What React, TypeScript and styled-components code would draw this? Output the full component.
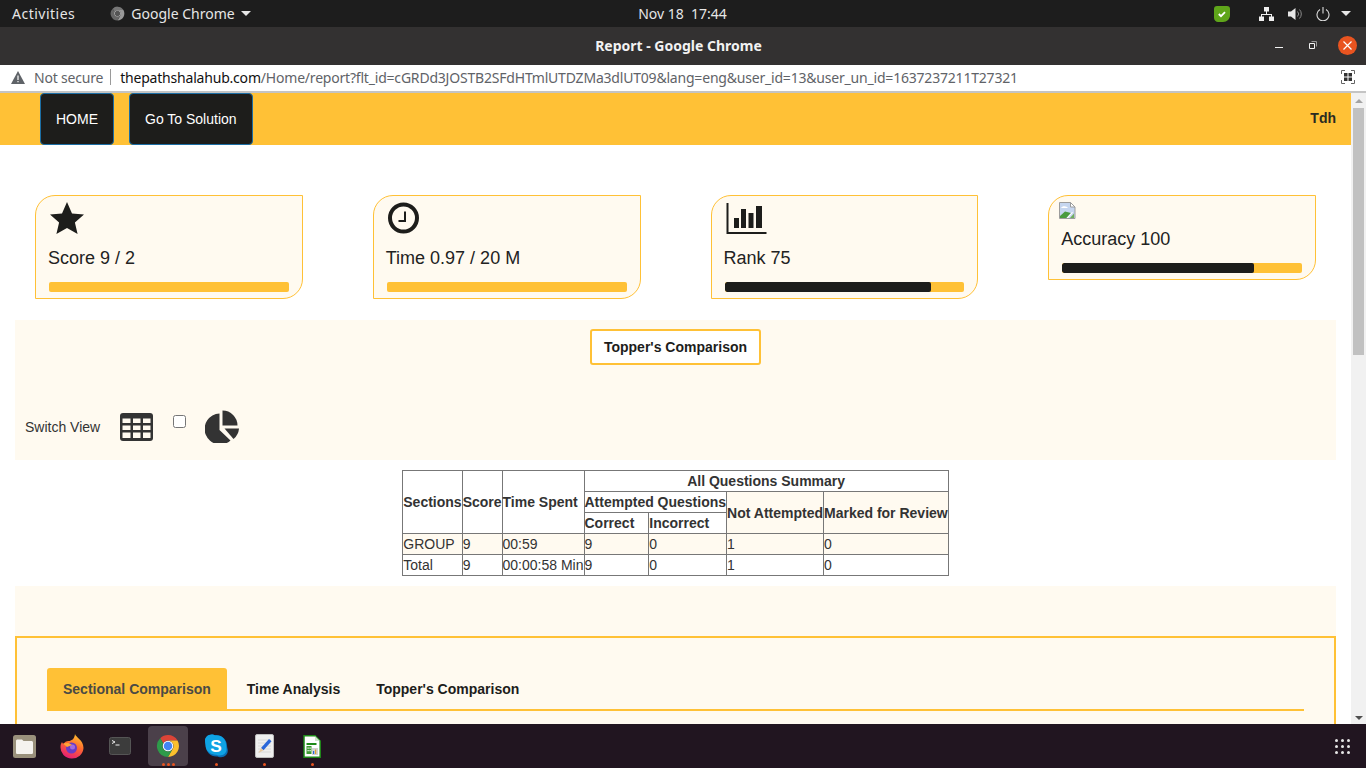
import React from "react";
import styled, { createGlobalStyle } from "styled-components";

const YELLOW = "#ffc136";
const CREAM = "#fffaf0";
const INK = "#1d1d1b";
const UI_FONT = `"Noto Sans", "Open Sans", sans-serif`;
const PAGE_FONT = `"Liberation Sans", Arial, sans-serif`;

const Global = createGlobalStyle`
  html, body { margin: 0; padding: 0; overflow: hidden; background: #fff; }
  * { box-sizing: border-box; }
`;

const Screen = styled.div`
  width: 1366px;
  height: 768px;
  display: flex;
  flex-direction: column;
  overflow: hidden;
  font-family: ${PAGE_FONT};
`;

/* ---------- desktop top bar ---------- */
const TopBar = styled.div`
  height: 27px;
  flex: none;
  background: #1d1d1d;
  color: #e6e6e6;
  font-family: ${UI_FONT};
  font-size: 14px;
  display: grid;
  grid-template-columns: 1fr auto 1fr;
  align-items: center;
  padding: 0 15px 0 12px;
`;
const TopLeft = styled.div`
  display: flex;
  align-items: center;
`;
const Activities = styled.span`
  letter-spacing: 0.5px;
`;
const AppMenu = styled.div`
  display: flex;
  align-items: center;
  gap: 6px;
  margin-left: 35px;
`;
const Clock = styled.div`
  white-space: pre;
  font-size: 14px;
  margin-left: 2px;
`;
const Tray = styled.div`
  display: flex;
  align-items: center;
  justify-content: flex-end;
`;
const TrayIcon = styled.span<{ $gap: number }>`
  display: flex;
  margin-left: ${(p) => p.$gap}px;
`;
const Caret = styled.span`
  width: 0;
  height: 0;
  border-left: 5px solid transparent;
  border-right: 5px solid transparent;
  border-top: 5px solid #e6e6e6;
`;

/* ---------- browser chrome ---------- */
const TitleBar = styled.div`
  height: 38px;
  flex: none;
  background: #333131;
  color: #f2f2f2;
  font-family: ${UI_FONT};
  font-size: 14px;
  font-weight: 700;
  display: grid;
  grid-template-columns: 1fr auto 1fr;
  align-items: center;
  padding: 0 9px 2px 0;
`;
const WindowButtons = styled.div`
  grid-column: 3;
  display: flex;
  align-items: center;
  justify-content: flex-end;
`;
const MinButton = styled.span`
  width: 8px;
  height: 1px;
  background: #f2f2f2;
  margin-top: 4px;
`;
const RestoreButton = styled.span`
  display: flex;
  margin-left: 26px;
`;
const CloseButton = styled.span`
  width: 19px;
  height: 19px;
  margin-left: 21px;
  border-radius: 50%;
  background: #e95420;
  display: flex;
  align-items: center;
  justify-content: center;
`;
const AddressBar = styled.div`
  height: 28px;
  flex: none;
  background: #fff;
  border-bottom: 2px solid #c4c4c4;
  font-family: ${UI_FONT};
  font-size: 14px;
  letter-spacing: -0.2px;
  color: #5f6368;
  display: flex;
  align-items: center;
  padding: 0 11px 2px 11px;
`;
const Warning = styled.span`
  display: flex;
  margin-right: 9px;
`;
const Divider = styled.span`
  width: 1px;
  height: 16px;
  background: #9a9a9a;
  margin: 0 9px 0 7px;
`;
const Host = styled.span`
  color: #111;
`;
const UrlText = styled.div`
  flex: 1;
  white-space: nowrap;
`;

/* ---------- page ---------- */
const Viewport = styled.div`
  flex: 1;
  min-height: 0;
  display: flex;
`;
const Page = styled.div`
  flex: 1;
  min-width: 0;
  overflow: hidden;
  background: #fff;
  color: ${INK};
`;
const Scrollbar = styled.div`
  width: 15px;
  flex: none;
  background: #f1f1f1;
  display: flex;
  flex-direction: column;
  align-items: center;
  padding-top: 6px;
`;
const ArrowUp = styled.span`
  width: 0;
  height: 0;
  border-left: 4px solid transparent;
  border-right: 4px solid transparent;
  border-bottom: 4px solid #a3a3a3;
`;
const ArrowDown = styled.span`
  width: 0;
  height: 0;
  margin-top: auto;
  margin-bottom: 4px;
  border-left: 4px solid transparent;
  border-right: 4px solid transparent;
  border-top: 4px solid #505050;
`;
const Thumb = styled.div`
  width: 11px;
  height: 247px;
  background: #c1c1c1;
  margin-top: 5px;
`;

const Header = styled.header`
  height: 52px;
  background: ${YELLOW};
  display: flex;
  align-items: stretch;
  padding: 0 15px 0 40px;
`;
const NavButton = styled.button`
  background: ${INK};
  color: #fff;
  font-family: ${PAGE_FONT};
  font-size: 14px;
  border: 1px solid #1c6ea4;
  border-radius: 4px;
  padding: 0 15px;
  margin-right: 15px;
`;
const UserName = styled.div`
  margin-left: auto;
  align-self: center;
  font-size: 14px;
  font-weight: 700;
  margin-top: -2px;
  color: #2a2a22;
`;

const Cards = styled.div`
  display: grid;
  grid-template-columns: repeat(4, 1fr);
  align-items: start;
  margin-top: 50px;
`;
const CardCell = styled.div`
  padding: 0 35px;
`;
const Card = styled.div`
  background: ${CREAM};
  border: 1px solid ${YELLOW};
  border-radius: 20px 0 20px 0;
  padding: 6px 13px 6px 13px;
`;
const IconSlot = styled.div<{ $height: number; $shift: number }>`
  height: ${(p) => p.$height}px;
  margin-left: ${(p) => p.$shift}px;
  display: flex;
  align-items: flex-start;
`;
const CardLabel = styled.div`
  font-size: 18px;
  line-height: 26px;
  margin: 8px 0 11px -1px;
  color: #222;
`;
const Progress = styled.div`
  height: 10px;
  background: ${YELLOW};
  border-radius: 2px;
  overflow: hidden;
`;
const ProgressFill = styled.div`
  height: 100%;
  background: ${INK};
  border-radius: 2px;
`;

const Band = styled.section`
  background: ${CREAM};
  margin: 21px 15px 0;
  height: 140px;
  padding: 9px 10px 0;
  display: flex;
  flex-direction: column;
`;
const OutlineButton = styled.button`
  align-self: center;
  height: 36px;
  padding: 0 12px;
  background: #fff;
  border: 2px solid ${YELLOW};
  border-radius: 3px;
  font-family: ${PAGE_FONT};
  font-size: 14px;
  font-weight: 700;
  color: ${INK};
`;
const SwitchRow = styled.div`
  display: flex;
  align-items: center;
  height: 33px;
  margin-top: 45px;
`;
const SwitchLabel = styled.span`
  font-size: 14px;
  color: #333;
  margin-right: 20px;
`;
const Toggle = styled.input`
  width: 13px;
  height: 13px;
  margin: 0 19px 10px 20px;
`;

const SummaryTable = styled.table`
  border-collapse: collapse;
  margin: 10px auto 0;
  font-size: 14px;
  line-height: 20px;
  color: #333;
`;
const Head = styled.th<{ $tint?: boolean }>`
  border: 1px solid #777;
  padding: 0;
  text-align: left;
  white-space: nowrap;
  background: ${(p) => (p.$tint ? CREAM : "#fff")};
`;
const CenterHead = styled(Head)`
  text-align: center;
`;
const Cell = styled.td<{ $tint?: boolean }>`
  border: 1px solid #777;
  padding: 0;
  white-space: nowrap;
  background: ${(p) => (p.$tint ? CREAM : "#fff")};
`;

const EmptyBand = styled.div`
  background: ${CREAM};
  height: 50px;
  margin: 10px 15px 0;
`;
const TabPanel = styled.section`
  margin: 0 15px;
  height: 200px;
  background: ${CREAM};
  border: 2px solid ${YELLOW};
  padding: 30px;
`;
const TabList = styled.div`
  display: flex;
  border-bottom: 2px solid ${YELLOW};
  height: 43px;
`;
const Tab = styled.div<{ $active?: boolean }>`
  height: 42px;
  padding: 0 16px;
  margin-right: 4px;
  display: flex;
  align-items: center;
  font-size: 14px;
  font-weight: 700;
  border-radius: 3px 3px 0 0;
  color: ${(p) => (p.$active ? "#4a4a45" : INK)};
  background: ${(p) => (p.$active ? YELLOW : "transparent")};
`;

/* ---------- dock ---------- */
const Dock = styled.div`
  height: 44px;
  flex: none;
  background: #211520;
  display: flex;
  align-items: center;
`;
const DockItem = styled.div`
  width: 48px;
  height: 40px;
  display: flex;
  align-items: center;
  justify-content: center;
  position: relative;
`;
const DockActive = styled(DockItem)`
  &::before {
    content: "";
    position: absolute;
    left: 4px;
    right: 4px;
    top: 0;
    bottom: 0;
    background: #4b404a;
    border-radius: 4px;
  }
  & > svg {
    position: relative;
  }
`;
const Dots = styled.div`
  position: absolute;
  bottom: 0;
  left: 0;
  right: 0;
  display: flex;
  justify-content: center;
  gap: 2px;
`;
const Dot = styled.span`
  width: 3px;
  height: 3px;
  border-radius: 50%;
  background: #e95420;
`;
const AppGrid = styled.div`
  margin-left: auto;
  margin-right: 16px;
  display: grid;
  grid-template-columns: repeat(3, 3px);
  gap: 3px;
`;
const GridDot = styled.span`
  width: 3px;
  height: 3px;
  border-radius: 50%;
  background: #e6e6e6;
`;

/* ---------- drawings ---------- */
const ChromeLogo = ({ size, grey }: { size: number; grey?: boolean }) => (
  <svg width={size} height={size} viewBox="0 0 48 48">
    <path d="M24 2a22 22 0 0 1 19.05 11H24a11 11 0 0 0-9.53 5.5L8.44 8.44A22 22 0 0 1 24 2z" fill={grey ? "#777" : "#db4437"} />
    <path d="M24 13h19.05A22 22 0 0 1 24 46l9.53-16.5A11 11 0 0 0 24 13z" fill={grey ? "#999" : "#fbc02d"} />
    <path d="M14.47 18.5 8.44 8.44A22 22 0 0 0 24 46l9.53-16.5a11 11 0 0 1-19.06-11z" fill={grey ? "#666" : "#2e9b4a"} />
    <circle cx="24" cy="24" r="10.5" fill={grey ? "#ccc" : "#fff"} />
    <circle cx="24" cy="24" r="8.5" fill={grey ? "#555" : "#4285f4"} />
  </svg>
);

const StarIcon = () => (
  <svg width="34" height="32" viewBox="0 0 34 32">
    <path d="M17 0l5 11.4 12 1.2-9.1 8 2.7 11.4L17 26l-10.6 6 2.7-11.4-9.1-8 12-1.2z" fill={INK} />
  </svg>
);
const ClockIcon = () => (
  <svg width="32" height="33" viewBox="0 0 32 33">
    <ellipse cx="15.500" cy="16" rx="13.500" ry="13.500" fill="none" stroke={INK} strokeWidth="4" />
    <path d="M17 9.500V19h-6.500" fill="none" stroke={INK} strokeWidth="2" />
  </svg>
);
const BarsIcon = () => (
  <svg width="41" height="33" viewBox="0 0 41 33">
    <path d="M1.500 1v30h39" fill="none" stroke={INK} strokeWidth="2" />
    <path d="M8 16h5v10H8zM15 7h5v19h-5zM22.500 11h5v15h-5zM30 4h6v22h-6z" fill={INK} />
  </svg>
);
const BrokenImage = () => (
  <svg width="17" height="17" viewBox="0 0 17 17">
    <path d="M.5.500h11l4.500 4.500v11.500H.5z" fill="#c6d6ef" stroke="#9c9c9c" />
    <path d="M11.500.5v4.500H16z" fill="#fff" stroke="#9c9c9c" />
    <path d="M2 6c1-2 4-2.500 6-1l1 1z" fill="#fff" />
    <path d="M1 16v-2l5-4.500 6 1.500-4.500 5z" fill="#4a9b3f" />
    <path d="M7.500 16l5.500-6 1 .5-5 5.500z" fill="#fff" />
    <path d="M11 16l4-4.500V16z" fill="#6fae5c" />
  </svg>
);
const TableIcon = () => (
  <svg width="33" height="28" viewBox="0 0 33 28">
    <rect width="33" height="28" rx="3" fill="#333" />
    <path d="M2.500 5.500h8V10h-8zM13 5.500h7.500V10H13zM23 5.500h7.500V10H23zM2.500 12.500h8v4.500h-8zM13 12.500h7.500v4.500H13zM23 12.500h7.500v4.500H23zM2.500 19.500h8v5.500h-8zM13 19.500h7.500v5.500H13zM23 19.500h7.500v5.500H23z" fill={CREAM} />
  </svg>
);
const PieIcon = () => (
  <svg width="36" height="33" viewBox="0 0 36 33">
    <path d="M14.500 3.500V20L25.500 30.500A15.500 15.500 0 1 1 14.500 3.500z" fill="#333" />
    <path d="M17.500 .5A15 15 0 0 1 32.500 15.500H17.500z" fill="#333" />
    <path d="M19.500 18.500H34A15 15 0 0 1 28.500 29z" fill="#333" />
  </svg>
);

const Network = () => (
  <svg width="15" height="14" viewBox="0 0 15 14">
    <path d="M5 0h5v4.500H5zM0 9.500h5V14H0zM10 9.500h5V14h-5zM7 4.500h1v2.500h5v2.500h-1V8H3v1.500H2V7h5z" fill="#eee" />
  </svg>
);
const Speaker = () => (
  <svg width="15" height="14" viewBox="0 0 15 14">
    <path d="M0 4.500h3L7.500 1v12L3 9.500H0z" fill="#e6e6e6" />
    <path d="M9.500 4.500a3.500 3.500 0 0 1 0 5M11.500 2.500a6.500 6.500 0 0 1 0 9" fill="none" stroke="#8a8a8a" />
  </svg>
);
const Power = () => (
  <svg width="14" height="14" viewBox="0 0 14 14">
    <path d="M4 2.600a6 6 0 1 0 6 0" fill="none" stroke="#dcdcdc" strokeWidth="1.100" />
    <path d="M7 0v6.500" stroke="#dcdcdc" strokeWidth="1.100" />
  </svg>
);
const Shield = () => (
  <svg width="16" height="16" viewBox="0 0 16 16">
    <path d="M3 0h10c2 0 3 1 3 3v6c0 4-3 7-7 7H4c-2 0-4-2-4-4V3c0-2 1-3 3-3z" fill="#5fa51a" />
    <path d="M4.800 8l2.200 2.200 4-4" fill="none" stroke="#fff" strokeWidth="1.800" />
  </svg>
);
const QrIcon = () => (
  <svg width="14" height="14" viewBox="0 0 14 14">
    <path d="M.5 4V.5H4M10 .5h3.500V4M13.500 10v3.500H10M4 13.500H.5V10" fill="none" stroke="#666" />
    <path d="M3 3h3.500v3.500H3zM7.500 3H11v3.500H7.500zM3 7.500h3.500V11H3zM7.500 7.500H11V11H7.500z" fill="#333" />
  </svg>
);
const WarnIcon = () => (
  <svg width="14" height="13" viewBox="0 0 14 13">
    <path d="M7 0l7 13H0z" fill="#5f6368" />
    <path d="M6.400 4.500h1.200v4.500H6.400zM6.400 10h1.200v1.300H6.400z" fill="#fff" />
  </svg>
);

const FilesIcon = () => (
  <svg width="23" height="23" viewBox="0 0 23 23">
    <rect width="23" height="23" rx="2.500" fill="#9a917c" />
    <path d="M3 6c0-1 .7-1.500 1.500-1.500h4.500l1.500 1.500h8c.8 0 1.500.6 1.500 1.500v10c0 1-.7 1.500-1.500 1.500h-14C3.700 19 3 18.500 3 17.500z" fill="#f5f3ef" />
  </svg>
);
const FirefoxIcon = () => (
  <svg width="24" height="25" viewBox="0 0 24 25">
    <defs>
      <linearGradient id="fx" x1="0.700" y1="0" x2="0.300" y2="1">
        <stop offset="0" stopColor="#ffc42e" />
        <stop offset="0.450" stopColor="#ff6a2e" />
        <stop offset="1" stopColor="#e3197a" />
      </linearGradient>
    </defs>
    <path d="M15 0c.5 3 8.500 6 8.500 14a11.500 11 0 1 1-23-1c0-2 .5-3.500 1.500-5 .3 1 .8 1.500 1.500 2 1-2 3-3 5-3 3 0 6-2 6.500-7z" fill="url(#fx)" />
    <circle cx="11.500" cy="14" r="5.500" fill="#6a3bc4" />
    <circle cx="12.500" cy="13" r="2.500" fill="#a06be0" />
    <path d="M3 9.500c3-1 7-1 9 1.500l-5 2z" fill="#ffa436" />
  </svg>
);
const TerminalIcon = () => (
  <svg width="22" height="18" viewBox="0 0 22 18">
    <rect x=".5" y=".5" width="21" height="17" rx="2" fill="#3c3c3c" stroke="#555" />
    <path d="M3 3.500l3 1.500-3 1.500" fill="none" stroke="#eee" />
    <path d="M6.500 8h4" stroke="#eee" />
  </svg>
);
const SkypeIcon = () => (
  <svg width="23" height="24" viewBox="0 0 24 24">
    <path d="M7 0c2 0 3 .8 5 .8 6 0 11 5 11 11 0 2 .8 3 .8 5 0 4-3 7-7 7-2 0-3-.8-5-.8-6 0-11-5-11-11 0-2-.8-3-.8-5C0 3 3 0 7 0z" fill="#0a6fb5" />
    <path d="M7 0c2 0 3 .8 5 .8 6 0 10 5 10 10 0 2 .5 3 .5 5 0 3-3 6-7 6-2 0-3-.8-5-.8-6 0-10-5-10-10 0-2-.5-3-.5-5C0 3 3 0 7 0z" fill="#0fa3e4" />
    <text x="11.500" y="18" textAnchor="middle" fontFamily={PAGE_FONT} fontSize="18" fontWeight="700" fill="#fff">S</text>
  </svg>
);
const WriterIcon = () => (
  <svg width="19" height="24" viewBox="0 0 19 24">
    <rect x=".5" y=".5" width="18" height="23" rx="1.500" fill="#efefef" stroke="#bdbdbd" />
    <path d="M3 6h13M3 9h13M3 12h13M3 15h13M3 18h13" stroke="#d9d9d9" />
    <path d="M6 14L14 5l2.500 2.300-8 9z" fill="#2a66d9" />
    <path d="M6 14l2.500 2.300L3.500 19z" fill="#e8c9a0" />
  </svg>
);
const CalcIcon = () => (
  <svg width="18" height="23" viewBox="0 0 18 23">
    <path d="M1 .8h11l5.200 5.200v16.200H1z" fill="#fff" stroke="#1e8a18" strokeWidth="1.500" />
    <path d="M12 1v5h5z" fill="#cfe6cb" />
    <path d="M3.500 8h10v2h-10z" fill="#1e8a18" />
    <path d="M3.500 11h5v8h-5z" fill="#3f9a35" />
    <path d="M4.500 12.500h1.200v1.200H4.500zM6.500 12.500h1.200v1.200H6.500zM4.500 15h1.200v1.200H4.500zM6.500 15h1.200v1.200H6.500z" fill="#fff" />
    <path d="M9 13h6v7H9z" fill="#d2d2d2" />
    <path d="M10 16h1.200v3H10z" fill="#2a66d9" />
    <path d="M12 14.500h1.200V19H12z" fill="#e0a030" />
  </svg>
);

const stats = [
  { label: "Score 9 / 2", icon: <StarIcon />, height: 35, shift: 1, fill: 0 },
  { label: "Time 0.97 / 20 M", icon: <ClockIcon />, height: 35, shift: 1, fill: 0 },
  { label: "Rank 75", icon: <BarsIcon />, height: 35, shift: 1, fill: 86 },
  { label: "Accuracy 100", icon: <BrokenImage />, height: 16, shift: -3, fill: 80 },
];

const dockApps = [
  { key: "files", icon: <FilesIcon />, dots: 0 },
  { key: "firefox", icon: <FirefoxIcon />, dots: 0 },
  { key: "terminal", icon: <TerminalIcon />, dots: 0 },
  { key: "chrome", icon: <ChromeLogo size={24} />, dots: 3 },
  { key: "skype", icon: <SkypeIcon />, dots: 1 },
  { key: "writer", icon: <WriterIcon />, dots: 1 },
  { key: "calc", icon: <CalcIcon />, dots: 1 },
];

const rows = [
  { name: "GROUP", time: "00:59", tint: true },
  { name: "Total", time: "00:00:58 Min", tint: false },
];

const App = () => {
  return (
    <Screen>
      <Global />
      <TopBar>
        <TopLeft>
          <Activities>Activities</Activities>
          <AppMenu>
            <ChromeLogo size={15} grey />
            Google Chrome
            <Caret />
          </AppMenu>
        </TopLeft>
        <Clock>Nov 18  17:44</Clock>
        <Tray>
          <TrayIcon $gap={0}><Shield /></TrayIcon>
          <TrayIcon $gap={29}><Network /></TrayIcon>
          <TrayIcon $gap={14}><Speaker /></TrayIcon>
          <TrayIcon $gap={13}><Power /></TrayIcon>
          <TrayIcon $gap={11}><Caret /></TrayIcon>
        </Tray>
      </TopBar>

      <TitleBar>
        <span />
        <span>Report - Google Chrome</span>
        <WindowButtons>
          <MinButton />
          <RestoreButton>
            <svg width="8" height="8" viewBox="0 0 8 8">
              <path d="M.5 2.500h5v5h-5z" fill="none" stroke="#f2f2f2" />
              <path d="M2.500 .5h5v5" fill="none" stroke="#999" />
            </svg>
          </RestoreButton>
          <CloseButton>
            <svg width="9" height="9" viewBox="0 0 9 9">
              <path d="M.5.500l8 8M8.500.500l-8 8" stroke="#fff" strokeWidth="1.200" />
            </svg>
          </CloseButton>
        </WindowButtons>
      </TitleBar>

      <AddressBar>
        <Warning><WarnIcon /></Warning>
        Not secure
        <Divider />
        <UrlText>
          <Host>thepathshalahub.com</Host>
          /Home/report?flt_id=cGRDd3JOSTB2SFdHTmlUTDZMa3dlUT09&amp;lang=eng&amp;user_id=13&amp;user_un_id=1637237211T27321
        </UrlText>
        <QrIcon />
      </AddressBar>

      <Viewport>
        <Page>
          <Header>
            <NavButton>HOME</NavButton>
            <NavButton>Go To Solution</NavButton>
            <UserName>Tdh</UserName>
          </Header>

          <Cards>
            {stats.map((s) => (
              <CardCell key={s.label}>
                <Card>
                  <IconSlot $height={s.height} $shift={s.shift}>{s.icon}</IconSlot>
                  <CardLabel>{s.label}</CardLabel>
                  <Progress>
                    <ProgressFill style={{ width: `${s.fill}%` }} />
                  </Progress>
                </Card>
              </CardCell>
            ))}
          </Cards>

          <Band>
            <OutlineButton>Topper's Comparison</OutlineButton>
            <SwitchRow>
              <SwitchLabel>Switch View</SwitchLabel>
              <TableIcon />
              <Toggle type="checkbox" />
              <PieIcon />
            </SwitchRow>
          </Band>

          <SummaryTable>
            <thead>
              <tr>
                <Head rowSpan={3}>Sections</Head>
                <Head rowSpan={3}>Score</Head>
                <Head rowSpan={3}>Time Spent</Head>
                <CenterHead colSpan={4}>All Questions Summary</CenterHead>
              </tr>
              <tr>
                <Head colSpan={2}>Attempted Questions</Head>
                <Head rowSpan={2} $tint>Not Attempted</Head>
                <Head rowSpan={2} $tint>Marked for Review</Head>
              </tr>
              <tr>
                <Head>Correct</Head>
                <Head>Incorrect</Head>
              </tr>
            </thead>
            <tbody>
              {rows.map((r) => (
                <tr key={r.name}>
                  <Cell $tint={r.tint}>{r.name}</Cell>
                  <Cell $tint={r.tint}>9</Cell>
                  <Cell $tint={r.tint}>{r.time}</Cell>
                  <Cell $tint={r.tint}>9</Cell>
                  <Cell $tint={r.tint}>0</Cell>
                  <Cell $tint={r.tint}>1</Cell>
                  <Cell $tint={r.tint}>0</Cell>
                </tr>
              ))}
            </tbody>
          </SummaryTable>

          <EmptyBand />
          <TabPanel>
            <TabList>
              <Tab $active>Sectional Comparison</Tab>
              <Tab>Time Analysis</Tab>
              <Tab>Topper's Comparison</Tab>
            </TabList>
          </TabPanel>
        </Page>
        <Scrollbar>
          <ArrowUp />
          <Thumb />
          <ArrowDown />
        </Scrollbar>
      </Viewport>

      <Dock>
        {dockApps.map((app) => {
          const Item = app.key === "chrome" ? DockActive : DockItem;
          return (
            <Item key={app.key}>
              {app.icon}
              {app.dots > 0 && (
                <Dots>
                  {Array.from({ length: app.dots }).map((_, i) => (
                    <Dot key={i} />
                  ))}
                </Dots>
              )}
            </Item>
          );
        })}
        <AppGrid>
          {Array.from({ length: 9 }).map((_, i) => (
            <GridDot key={i} />
          ))}
        </AppGrid>
      </Dock>
    </Screen>
  );
};

export default App;
